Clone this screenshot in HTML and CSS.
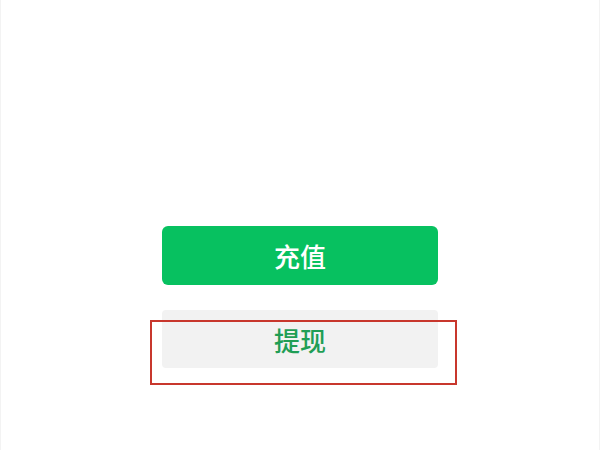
FILE: index.html
```html
<!DOCTYPE html>
<html lang="zh-CN">
<head>
<meta charset="utf-8">
<link rel="stylesheet" href="styles.css">
</head>
<body>
<div class="page">
  <div class="actions">
    <button class="btn btn-primary">充值</button>
    <div class="secondary-wrap">
      <button class="btn btn-secondary">提现</button>
      <div class="highlight"></div>
    </div>
  </div>
</div>
</body>
</html>
```
FILE: styles.css
```css
html, body {
  margin: 0;
  padding: 0;
  background: #ffffff;
}
.page {
  width: 600px;
  height: 450px;
  box-sizing: border-box;
  border-left: 1px solid #f3f3f3;
  border-right: 1px solid #f3f3f3;
  font-family: "Noto Sans CJK SC", "Noto Sans", sans-serif;
}
.actions {
  display: flex;
  flex-direction: column;
  align-items: center;
  padding-top: 226px;
  gap: 25px;
}
.btn {
  width: 276px;
  height: 59px;
  border: none;
  border-radius: 6px;
  font-family: "Noto Sans CJK SC", "Noto Sans", sans-serif;
  font-size: 26px;
  font-weight: 500;
  padding: 0;
  display: flex;
  align-items: center;
  justify-content: center;
}
.btn-primary {
  background: #07c160;
  color: #ffffff;
}
.secondary-wrap {
  position: relative;
}
.btn-secondary {
  background: #f2f2f2;
  color: #1f9e55;
  height: 58px;
  border-radius: 4px;
}
.highlight {
  position: absolute;
  left: -12px;
  top: 10px;
  width: 307px;
  height: 65px;
  box-sizing: border-box;
  border: 2px solid #c8372d;
}
```
